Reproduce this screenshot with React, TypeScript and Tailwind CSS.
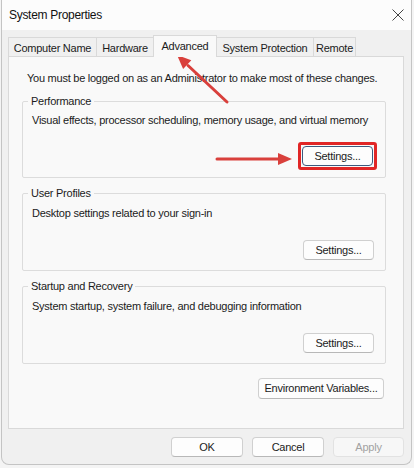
import React from "react";

function Button({ children, className = "", disabled = false }: { children: React.ReactNode; className?: string; disabled?: boolean }) {
    return (
        <button
            className={
                "h-[20px] rounded-[4px] border flex items-center justify-center " +
                (disabled
                    ? "border-[#e2e2e2] bg-[#f7f7f7] text-[#a2a2a2]"
                    : "border-[#d0d0d0] border-b-[#b8b8b8] bg-[#fdfdfd] text-[#1b1b1b]") +
                " " +
                className
            }
        >
            {children}
        </button>
    );
}

function Group({ title, text, first = false }: { title: string; text: string; first?: boolean }) {
    return (
        <fieldset className={"border border-[#dcdcdc] rounded-[2px] pl-[9px] pr-[11px] flex flex-col " + (first ? "pb-[7px]" : "mt-[7px] pb-[10px]")}>
            <legend className="ml-[-4px] px-[3px] leading-[16px]">{title}</legend>
            <p className={"leading-[16px] " + (first ? "mt-[3px]" : "mt-[4px]")}>{text}</p>
            {first ? (
                // red annotation box around the default button
                <div className="self-end mt-[14px] -mr-[3px] border-[3px] border-[#e12626] rounded-[3px] p-px">
                    <Button className="w-[71px] !border-[#3d5a7e] rounded-[3px]">Settings...</Button>
                </div>
            ) : (
                <Button className="self-end w-[71px] mt-[19px]">Settings...</Button>
            )}
        </fieldset>
    );
}

export default function App() {
    return (
        <div className="relative w-[414px] h-[468px] bg-[#f4f4f4] font-['Liberation_Sans',Arial,sans-serif] text-[11px] tracking-[-0.25px] text-[#1b1b1b]">
            <div className="ml-[1px] w-[411px] h-[465px] border border-t-0 border-[#c4c4c4] rounded-b-[8px] bg-[#f0f0f0] flex flex-col overflow-hidden">
                {/* title bar */}
                <div className="h-[30px] bg-[#fcfcfc] flex items-center justify-between pl-[7px] pr-[7px]">
                    <span className="text-[12px] tracking-[-0.3px] text-[#111]">System Properties</span>
                    <svg width="12" height="12" viewBox="0 0 12 12">
                        <path d="M0.5 0.5 L11.5 11.5 M11.5 0.5 L0.5 11.5" stroke="#444" strokeWidth="1" fill="none" />
                    </svg>
                </div>

                <div className="flex flex-col pl-[6px] pr-[7px] pt-[5px]">
                    {/* tabs */}
                    <div className="flex items-end h-[21px]">
                        <div className="w-[88px] h-[19px] border-t border-l border-[#d9d9d9] flex items-center justify-center pt-[2px]">Computer Name</div>
                        <div className="w-[57px] h-[19px] border-t border-l border-[#d9d9d9] flex items-center justify-center pt-[2px]">Hardware</div>
                        <div className="relative z-10 w-[64px] h-[22px] -mb-px border-t border-x border-[#d9d9d9] bg-[#f9f9f9] flex items-center justify-center">Advanced</div>
                        <div className="w-[96px] h-[19px] border-t border-[#d9d9d9] flex items-center justify-center pt-[2px]">System Protection</div>
                        <div className="w-[43px] h-[19px] border-t border-x border-[#d9d9d9] flex items-center justify-center pt-[2px]">Remote</div>
                    </div>

                    {/* panel */}
                    <div className="h-[373px] border border-[#d9d9d9] bg-[#f9f9f9] pt-[13px] pl-[13px] pr-[17px] flex flex-col">
                        <p className="ml-[5px] leading-[16px]">You must be logged on as an Administrator to make most of these changes.</p>
                        <div className="mt-[7px] flex flex-col">
                            <Group title="Performance" text="Visual effects, processor scheduling, memory usage, and virtual memory" first />
                            <Group title="User Profiles" text="Desktop settings related to your sign-in" />
                            <Group title="Startup and Recovery" text="System startup, system failure, and debugging information" />
                        </div>
                        <Button className="self-end w-[126px] h-[21px] mt-[14px] mr-[2px]">Environment Variables...</Button>
                    </div>

                    {/* bottom buttons */}
                    <div className="mt-[8px] flex justify-end gap-[9px]">
                        <Button className="w-[72px]">OK</Button>
                        <Button className="w-[72px]">Cancel</Button>
                        <Button className="w-[71px]" disabled>
                            Apply
                        </Button>
                    </div>
                </div>
            </div>

            {/* annotation arrows */}
            <svg className="absolute inset-0 pointer-events-none" width="414" height="468">
                <line x1="227" y1="102" x2="188" y2="65.5" stroke="#d9403c" strokeWidth="3" strokeLinecap="round" />
                <polygon points="177,55 191.3,60.2 183.1,69" fill="#d9403c" />
                <line x1="217" y1="159" x2="280" y2="159" stroke="#d9403c" strokeWidth="3" strokeLinecap="round" />
                <polygon points="292,159 278,153 278,165" fill="#d9403c" />
            </svg>
        </div>
    );
}
